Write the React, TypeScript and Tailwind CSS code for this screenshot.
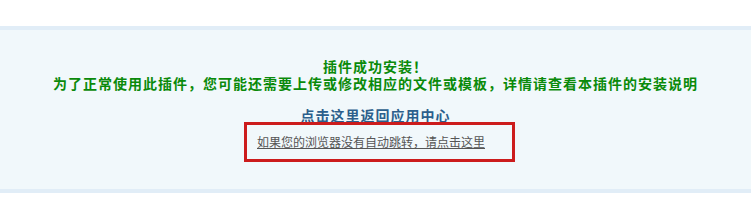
export default function App() {
  return (
    <div className="w-[751px] h-[224px] bg-white pt-[26px] font-['Noto_Sans_CJK_SC','Noto_Sans',sans-serif]">
      <div className="border-y-4 border-[#e1edf7] bg-[#f1f8fb] h-[167px] pt-[28px]">
        <div className="text-center text-[14px] leading-[17px] font-bold tracking-[1px] text-[#0a8a0a]">
          <p>插件成功安装！</p>
          <p>为了正常使用此插件，您可能还需要上传或修改相应的文件或模板，详情请查看本插件的安装说明</p>
        </div>
        <p className="mt-[15px] text-center text-[14px] leading-[17px] font-bold tracking-[1px] text-[#2c5f8c]">
          <a href="#">点击这里返回应用中心</a>
        </p>
        <div className="relative mt-[-2px] ml-[244px] w-[271px] h-[40px] border-[3px] border-[#cc1c1c] flex items-center pl-[10px]">
          <a href="#" className="text-[12px] leading-[14px] text-[#555] underline">
            如果您的浏览器没有自动跳转，请点击这里
          </a>
        </div>
      </div>
    </div>
  );
}
